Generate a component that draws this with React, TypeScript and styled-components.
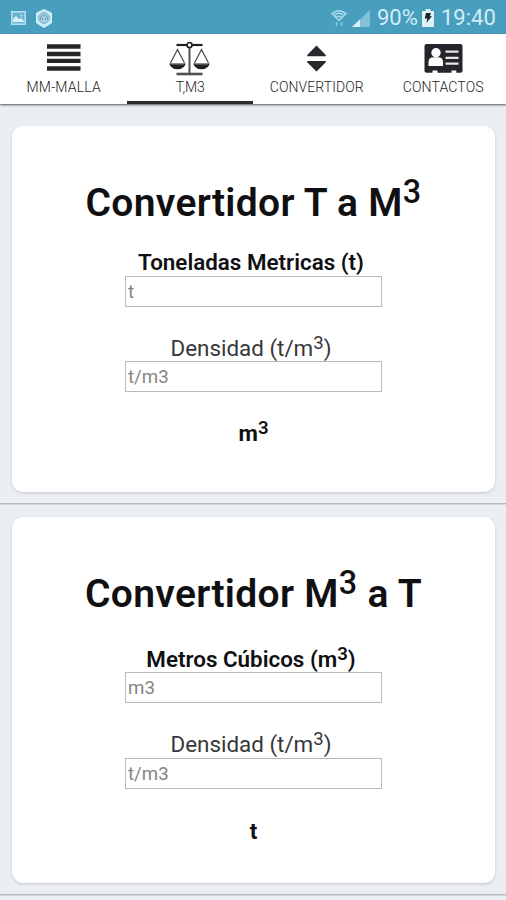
import React from "react";
import styled, { createGlobalStyle } from "styled-components";

const GlobalStyle = createGlobalStyle`
  * { box-sizing: border-box; }
  body {
    margin: 0;
    background: #ebeef2;
    font-family: Roboto, "Liberation Sans", sans-serif;
    color: #101012;
  }
`;

const Screen = styled.div`
  width: 506px;
  height: 900px;
  overflow: hidden;
  background: #ebeef2;
`;

const StatusBar = styled.header`
  height: 34px;
  padding: 2px 10px 0 11px;
  display: flex;
  align-items: center;
  justify-content: space-between;
  background: #489ebd;
  color: #d3ecf6;
`;

const StatusGroup = styled.div`
  display: flex;
  align-items: center;
  svg { display: block; flex: none; }
`;

const StatusText = styled.span<{ $width: number }>`
  width: ${(p) => p.$width}px;
  font-size: 22px;
  line-height: 32px;
  white-space: nowrap;
`;

const Gap = styled.span<{ $size: number }>`
  width: ${(p) => p.$size}px;
`;

const TabBar = styled.nav`
  height: 70px;
  display: grid;
  grid-template-columns: repeat(4, 1fr);
  background: #fff;
  box-shadow: 0 1px 2px rgba(0, 0, 0, 0.65);
`;

const Tab = styled.button<{ $active?: boolean }>`
  padding: 5px 0 0;
  border: 0;
  border-bottom: 3px solid ${(p) => (p.$active ? "#2b2b32" : "transparent")};
  display: flex;
  flex-direction: column;
  align-items: center;
  background: none;
  font-family: inherit;
  svg { display: block; flex: none; }
`;

const TabLabel = styled.span<{ $spacing: number }>`
  height: 20px;
  padding-left: 1px;
  font-size: 14px;
  font-weight: 300;
  line-height: 20px;
  letter-spacing: ${(p) => p.$spacing}px;
  color: #222226;
  white-space: nowrap;
`;

const Content = styled.main`
  padding-top: 22px;
`;

const Card = styled.section`
  height: 366px;
  margin: 0 11px 0 12px;
  padding-top: 53px;
  display: flex;
  flex-direction: column;
  align-items: center;
  border-radius: 11px;
  background: #fff;
  box-shadow: 0 1px 3px rgba(0, 0, 0, 0.17);
`;

const Sup = styled.sup`
  font-size: 0.83em;
  line-height: 0;
  vertical-align: 0.4em;
`;

const Title = styled.h1`
  height: 48px;
  margin: 0;
  font-size: 39px;
  font-weight: 600;
  line-height: 48px;
  letter-spacing: 0.3px;
  white-space: nowrap;
  ${Sup} { font-weight: 500; }
`;

const Label = styled.label<{ $gap: number; $height: number; $strong?: boolean }>`
  height: ${(p) => p.$height}px;
  margin-top: ${(p) => p.$gap}px;
  padding-right: 5px;
  font-size: 22.4px;
  font-weight: ${(p) => (p.$strong ? 600 : 400)};
  line-height: 28px;
  color: ${(p) => (p.$strong ? "#101012" : "#37373a")};
  white-space: nowrap;
`;

const Field = styled.input`
  width: 257px;
  height: 31px;
  padding: 0 2px;
  border: 1px solid #b9b9b9;
  border-radius: 0;
  outline: 0;
  background: #fff;
  font: 400 18.7px Roboto, sans-serif;
  &::placeholder { color: #858585; opacity: 1; }
`;

const Result = styled.output<{ $gap: number }>`
  height: 28px;
  margin-top: ${(p) => p.$gap}px;
  font-size: 22.4px;
  font-weight: 700;
  line-height: 28px;
  ${Sup} { font-weight: 600; }
`;

const Divider = styled.hr`
  height: 2px;
  margin: 11px 0 12px;
  border: 0;
  border-top: 1px solid #b6b8bd;
  border-bottom: 1px solid #d5d7db;
`;

const ImageIcon = () => (
  <svg width="15" height="14" viewBox="0 0 15 14">
    <rect x=".8" y=".8" width="13.4" height="12.4" fill="#69b1cc" stroke="#b9e2f2" strokeWidth="1.5" />
    <path d="M2 11V8l3-3 3 3 2-1 3 3v1z" fill="#d8f0f8" />
    <circle cx="10.5" cy="4.5" r="1" fill="#b9e2f2" />
  </svg>
);

const BadgeIcon = () => (
  <svg width="18" height="19" viewBox="0 0 18 19">
    <path d="M9 .5 16.5 4v10L9 18.5 1.5 14V4z" fill="#c9edf7" stroke="#c9edf7" strokeLinejoin="round" />
    <circle cx="9" cy="9" r="5.4" fill="#a2cbdc" stroke="#7fb4ca" />
    <path d="M5.5 11V8l3.5-2 3.5 2v3M7.5 9v2M10.5 9v2" stroke="#6fa4ba" fill="none" />
  </svg>
);

const WifiIcon = () => (
  <svg width="16" height="18" viewBox="0 0 16 18" fill="none" stroke="#a9dcec" strokeWidth="1.5">
    <path d="M1 4.5Q8-1 15 4.5L8 11.5z" />
    <path d="M3.5 6Q8 2.5 12.5 6M5.5 8.2Q8 6.5 10.5 8.2" />
    <path d="M5.5 13v4M10.5 13v4M4 15h3M9 15h3" strokeWidth="1" opacity=".6" />
  </svg>
);

const SignalIcon = () => (
  <svg width="18" height="17" viewBox="0 0 18 17">
    <path d="M0 17 18 0v17z" fill="#83bfd6" />
    <path d="M0 17 8 9.4V17z" fill="#d9f2fa" />
  </svg>
);

const BatteryIcon = () => (
  <svg width="12" height="18" viewBox="0 0 12 18">
    <path d="M3.5 0h5v2H12v16H0V2h3.5z" fill="#def2f6" />
    <path d="M4 4h5L7.8 7.3H10L4.3 14l1-4.5H2.7z" fill="#172a31" />
  </svg>
);

const BarsIcon = () => (
  <svg width="36" height="38" viewBox="0 0 36 38" fill="#242429">
    <path d="M2 5.3h33.5v4.4H2zM2 12.8h33.5v4.4H2zM2 19.8h33.5V24H2zM2 27.2h33.5v4.6H2z" />
  </svg>
);

const ScalesIcon = () => (
  <svg width="42" height="38" viewBox="0 0 42 38" fill="none" stroke="#202024">
    <path d="M7.5 6h26" strokeWidth="2.2" />
    <path d="M20.5 8v26" strokeWidth="2" stroke="#515156" />
    <path d="M7.5 35h26" strokeWidth="2.6" stroke="#505055" />
    <circle cx="20.5" cy="6" r="2.5" fill="#fff" strokeWidth="1.7" />
    <path d="M1.5 24 8.5 10.5 15.5 24M25.5 24l7-13.5L39.5 24" strokeWidth="1.2" stroke="#45454a" />
    <path d="M.3 24.5q1.7 5.8 8.2 5.8t8.2-5.8zM24.3 24.5q1.7 5.8 8.2 5.8t8.2-5.8z" fill="#202024" stroke="none" />
    <path d="M2.5 25h12M26.5 25h12" stroke="#85858a" strokeWidth="1" />
  </svg>
);

const SortIcon = () => (
  <svg width="22" height="38" viewBox="0 0 22 38" fill="#28282e">
    <path d="M11.5 6.5 20.8 16v1.3H2.2V16zM11.5 32.6 2.2 23.3V22h18.6v1.3z" />
  </svg>
);

const ContactIcon = () => (
  <svg width="40" height="38" viewBox="0 0 40 38">
    <path d="M3.5 5h34q2 0 2 2v25q0 1.8-2 1.8h-4.2v-2.2h-4.8v2.2h-14v-2.2h-5v2.2h-6q-2 0-2-1.8V7q0-2 2-2z" fill="#24242a" />
    <circle cx="13" cy="13.8" r="4.7" fill="#fff" />
    <path d="M5.5 27v-4q0-4.8 5-4.8h4.5q5 0 5 4.8v4z" fill="#fff" />
    <path d="M22.5 12.7h13M22.5 18.8h13M22.5 24.7h13" stroke="#e6e6e8" strokeWidth="2.2" />
  </svg>
);

const tabs = [
  { text: "MM-MALLA", icon: <BarsIcon />, spacing: 0.2 },
  { text: "T,M3", icon: <ScalesIcon />, spacing: -0.1, active: true },
  { text: "CONVERTIDOR", icon: <SortIcon />, spacing: 0.08 },
  { text: "CONTACTOS", icon: <ContactIcon />, spacing: 0.15 },
];

const Cubed = () => <Sup>3</Sup>;

export default function App() {
  return (
    <Screen>
      <GlobalStyle />
      <StatusBar>
        <StatusGroup>
          <ImageIcon />
          <Gap $size={9} />
          <BadgeIcon />
        </StatusGroup>
        <StatusGroup>
          <WifiIcon />
          <Gap $size={5} />
          <SignalIcon />
          <Gap $size={7} />
          <StatusText $width={41}>90%</StatusText>
          <Gap $size={4} />
          <BatteryIcon />
          <Gap $size={7} />
          <StatusText $width={55}>19:40</StatusText>
        </StatusGroup>
      </StatusBar>
      <TabBar>
        {tabs.map((tab) => (
          <Tab key={tab.text} $active={tab.active}>
            {tab.icon}
            <TabLabel $spacing={tab.spacing}>{tab.text}</TabLabel>
          </Tab>
        ))}
      </TabBar>
      <Content>
        <Card>
          <Title>Convertidor T a M<Cubed /></Title>
          <Label $gap={21} $height={28} $strong htmlFor="tons">Toneladas Metricas (t)</Label>
          <Field id="tons" placeholder="t" />
          <Label $gap={27} $height={27} htmlFor="density-a">Densidad (t/m<Cubed />)</Label>
          <Field id="density-a" placeholder="t/m3" />
          <Result $gap={27}>m<Cubed /></Result>
        </Card>
        <Divider />
        <Card>
          <Title>Convertidor M<Cubed /> a T</Title>
          <Label $gap={27} $height={27} $strong htmlFor="cubic">Metros Cúbicos (m<Cubed />)</Label>
          <Field id="cubic" placeholder="m3" />
          <Label $gap={27} $height={28} htmlFor="density-b">Densidad (t/m<Cubed />)</Label>
          <Field id="density-b" placeholder="t/m3" />
          <Result $gap={28}>t</Result>
        </Card>
        <Divider />
      </Content>
    </Screen>
  );
}
